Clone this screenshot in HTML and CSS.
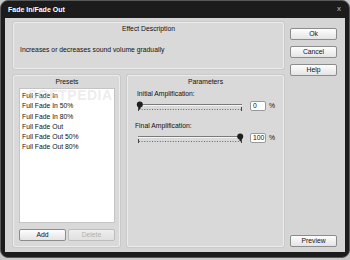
FILE: index.html
```html
<!DOCTYPE html>
<html lang="en">
<head>
    <meta charset="UTF-8">
    <title>Fade In/Fade Out</title>
    <link rel="stylesheet" href="styles.css">
</head>
<body>

    <div class="window">
        <div class="titlebar">
            <span class="title">Fade In/Fade Out</span>
            <span class="close">x</span>
        </div>

        <div class="client">
            <div class="main">
                <div class="panel effect">
                    <div class="panel-title">Effect Description</div>
                    <div class="effect-text">Increases or decreases sound volume gradually</div>
                </div>

                <div class="bottom-row">
                    <div class="panel presets">
                        <div class="panel-title">Presets</div>
                        <div class="list">
                            <div class="item">Full Fade In</div>
                            <div class="item">Full Fade In 50%</div>
                            <div class="item">Full Fade In 80%</div>
                            <div class="item">Full Fade Out</div>
                            <div class="item">Full Fade Out 50%</div>
                            <div class="item">Full Fade Out 80%</div>
                            <div class="watermark">SOFTPEDIA</div>
                        </div>
                        <div class="list-buttons">
                            <button class="btn">Add</button>
                            <button class="btn" disabled>Delete</button>
                        </div>
                    </div>

                    <div class="panel params">
                        <div class="panel-title">Parameters</div>

                        <div class="param-label">Initial Amplification:</div>
                        <div class="slider-row">
                            <svg class="slider" width="108" height="11" viewBox="0 0 108 11">
                                <line x1="2" y1="3.5" x2="106" y2="3.5" stroke="#7a7a7a"/>
                                <line x1="2" y1="4.5" x2="106" y2="4.5" stroke="#f4f4f4"/>
                                <line x1="3" y1="8.5" x2="105" y2="8.5" stroke="#666" stroke-dasharray="1 1.6"/>
                                <line x1="2.5" y1="6" x2="2.5" y2="10" stroke="#444"/>
                                <line x1="105.5" y1="6" x2="105.5" y2="10" stroke="#444"/>
                                <rect x="3" y="3" width="1.5" height="5" fill="#222"/>
                                <circle cx="3.8" cy="3.5" r="3" fill="#1e1e1e"/>
                            </svg>
                            <div class="num">0</div>
                            <span class="pct">%</span>
                        </div>

                        <div class="param-label final">Final Amplification:</div>
                        <div class="slider-row">
                            <svg class="slider" width="108" height="11" viewBox="0 0 108 11">
                                <line x1="2" y1="3.5" x2="106" y2="3.5" stroke="#7a7a7a"/>
                                <line x1="2" y1="4.5" x2="106" y2="4.5" stroke="#f4f4f4"/>
                                <line x1="3" y1="8.5" x2="105" y2="8.5" stroke="#666" stroke-dasharray="1 1.6"/>
                                <line x1="2.5" y1="6" x2="2.5" y2="10" stroke="#444"/>
                                <line x1="105.5" y1="6" x2="105.5" y2="10" stroke="#444"/>
                                <rect x="103.5" y="3" width="1.5" height="5" fill="#222"/>
                                <circle cx="104.2" cy="3.5" r="3" fill="#1e1e1e"/>
                            </svg>
                            <div class="num">100</div>
                            <span class="pct">%</span>
                        </div>
                    </div>
                </div>
            </div>

            <div class="side">
                <button class="btn">Ok</button>
                <button class="btn">Cancel</button>
                <button class="btn">Help</button>
                <button class="btn preview">Preview</button>
            </div>
        </div>
    </div>

</body>
</html>
```

FILE: styles.css
```css
html, body {
    margin: 0;
    padding: 0;
}
body {
    width: 350px;
    height: 260px;
    background-color: #c9c9c9;
    font-family: "Liberation Sans", Arial, sans-serif;
    font-size: 6.8px;
    color: #111;
    overflow: hidden;
}
.window {
    width: 350px;
    height: 258px;
    box-sizing: border-box;
    background-color: #1c1c1c;
    border: 1px solid #5a5a5a;
    border-radius: 8px;
    display: flex;
    flex-direction: column;
}
.titlebar {
    height: 17px;
    display: flex;
    align-items: center;
    justify-content: space-between;
    padding: 0 8px 0 7px;
}
.title {
    color: #fff;
    font-weight: bold;
    font-size: 7px;
}
.close {
    color: #bdbdbd;
    font-size: 8px;
    margin-top: -3px;
}
.client {
    margin: 0 4px;
    height: 234px;
    background-color: #d5d5d5;
    box-sizing: border-box;
    padding: 4px 8px 5px 8px;
    display: flex;
    gap: 6px;
}
.main {
    width: 271px;
    display: flex;
    flex-direction: column;
    gap: 6px;
}
.panel {
    box-sizing: border-box;
    background-color: #d9d9d9;
    border: 1px solid #ececec;
    border-radius: 2px;
    box-shadow: 0 0 0 1px #cacaca;
}
.panel-title {
    text-align: center;
    height: 9px;
    line-height: 9px;
    margin-top: 1px;
}
.effect {
    height: 47px;
}
.effect-text {
    margin: 13px 0 0 6px;
}
.bottom-row {
    flex: 1;
    display: flex;
    gap: 7px;
}
.presets {
    width: 111px;
    padding: 0 4px 0 5px;
    display: flex;
    flex-direction: column;
}
.list {
    position: relative;
    margin-top: 2px;
    height: 135px;
    background-color: #fff;
    border: 1px solid #c4c4c4;
    padding: 2px 0 0 2px;
    box-sizing: border-box;
    overflow: hidden;
}
.item {
    height: 10.3px;
    line-height: 10px;
}
.watermark {
    position: absolute;
    top: -2px;
    left: 8px;
    font-size: 14px;
    font-weight: bold;
    letter-spacing: 0.5px;
    color: rgba(215, 215, 215, 0.45);
}
.list-buttons {
    display: flex;
    justify-content: space-between;
    margin-top: 6px;
}
.btn {
    width: 47px;
    height: 12px;
    padding: 0;
    font-family: "Liberation Sans", Arial, sans-serif;
    font-size: 6.8px;
    color: #111;
    background: linear-gradient(#fdfdfd, #e4e4e4);
    border: 1px solid #8c8c8c;
    border-radius: 2px;
    line-height: 10px;
}
.btn:disabled {
    color: #b0b0b0;
    border-color: #bdbdbd;
    background: linear-gradient(#eeeeee, #e0e0e0);
}
.params {
    flex: 1;
    padding: 0 8px 0 8px;
}
.param-label {
    margin: 3px 0 0 1px;
    height: 9px;
    line-height: 9px;
}
.param-label.final {
    margin: 9px 0 0 -1px;
}
.slider-row {
    display: flex;
    align-items: center;
    margin-top: 1px;
}
.slider {
    display: block;
    margin-top: 2px;
}
.num {
    width: 16px;
    height: 10px;
    margin-left: 6px;
    box-sizing: border-box;
    background-color: #fff;
    border: 1px solid #9a9a9a;
    border-radius: 2px;
    padding-left: 2px;
    line-height: 8px;
}
.pct {
    margin-left: 3px;
}
.side {
    width: 47px;
    padding-top: 6px;
    display: flex;
    flex-direction: column;
    gap: 6px;
}
.preview {
    margin-top: auto;
}
```
